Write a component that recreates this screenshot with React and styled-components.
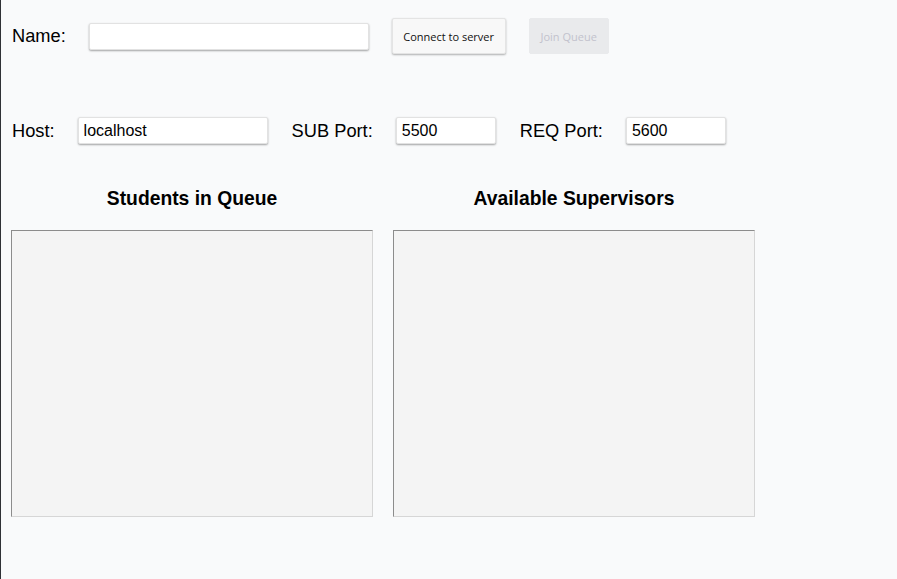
import React from 'react'
import styled, { createGlobalStyle } from 'styled-components'

const GlobalStyle = createGlobalStyle`
  html, body {
    margin: 0;
    padding: 0;
    background: #f9fafb;
  }
  body {
    font-family: "Liberation Sans", Arial, sans-serif;
    color: #000;
  }
`

const Page = styled.div`
  width: 897px;
  height: 579px;
  box-sizing: border-box;
  border-left: 1px solid #2f3136;
  padding: 18px 0 0 10px;
  overflow: hidden;
`

const Row = styled.div`
  display: flex;
  align-items: center;
  gap: 23px;
  height: ${p => p.$height}px;
  margin-bottom: ${p => p.$after}px;
`

const Label = styled.span`
  font-size: 18.25px;
  line-height: 22px;
  padding-left: 1px;
`

const Field = styled.input`
  box-sizing: border-box;
  width: ${p => p.$width}px;
  height: 27px;
  border: 1px solid #e2e2e2;
  border-radius: 2px;
  background: #fff;
  box-shadow: 0 1px 2px rgba(0, 0, 0, 0.35);
  padding: 0 5px;
  font-family: "Liberation Sans", Arial, sans-serif;
  font-size: 16px;
  color: #000;
  outline: none;
`

const Button = styled.button`
  box-sizing: border-box;
  height: 36px;
  padding: 0 ${p => p.$pad}px;
  border-radius: 2px;
  font-family: "Open Sans", "Noto Sans", sans-serif;
  font-size: 11px;
  border: 1px solid ${p => (p.disabled ? '#e9eaec' : '#e4e4e4')};
  background: ${p => (p.disabled ? '#e9eaec' : '#f8f8f8')};
  color: ${p => (p.disabled ? '#c2c2cc' : '#111')};
  box-shadow: ${p => (p.disabled ? 'none' : '0 1px 2px rgba(0, 0, 0, 0.3)')};
`

const Columns = styled.div`
  display: flex;
  gap: 20px;
  margin-top: 43px;
`

const Column = styled.div`
  width: 362px;
  display: flex;
  flex-direction: column;
`

const Heading = styled.h2`
  margin: 0 0 20px;
  padding-top: 1px;
  font-size: 19.3px;
  line-height: 22px;
  font-weight: bold;
  text-align: center;
`

const ListBox = styled.div`
  box-sizing: border-box;
  height: 287px;
  background: #f4f4f4;
  border: 1px solid;
  border-color: #8c8c8c #d6d6d6 #d6d6d6 #8c8c8c;
`

export default function App() {
  return (
    <>
      <GlobalStyle />
      <Page>
        <Row $height={36} $after={63}>
          <Label>Name:</Label>
          <Field $width={280} defaultValue="" />
          <Button $pad={10.5}>Connect to server</Button>
          <Button $pad={11} disabled>Join Queue</Button>
        </Row>
        <Row $height={27} $after={0}>
          <Label>Host:</Label>
          <Field $width={190} defaultValue="localhost" />
          <Label>SUB Port:</Label>
          <Field $width={100} defaultValue="5500" />
          <Label>REQ Port:</Label>
          <Field $width={100} defaultValue="5600" />
        </Row>
        <Columns>
          <Column>
            <Heading>Students in Queue</Heading>
            <ListBox />
          </Column>
          <Column>
            <Heading>Available Supervisors</Heading>
            <ListBox />
          </Column>
        </Columns>
      </Page>
    </>
  )
}
